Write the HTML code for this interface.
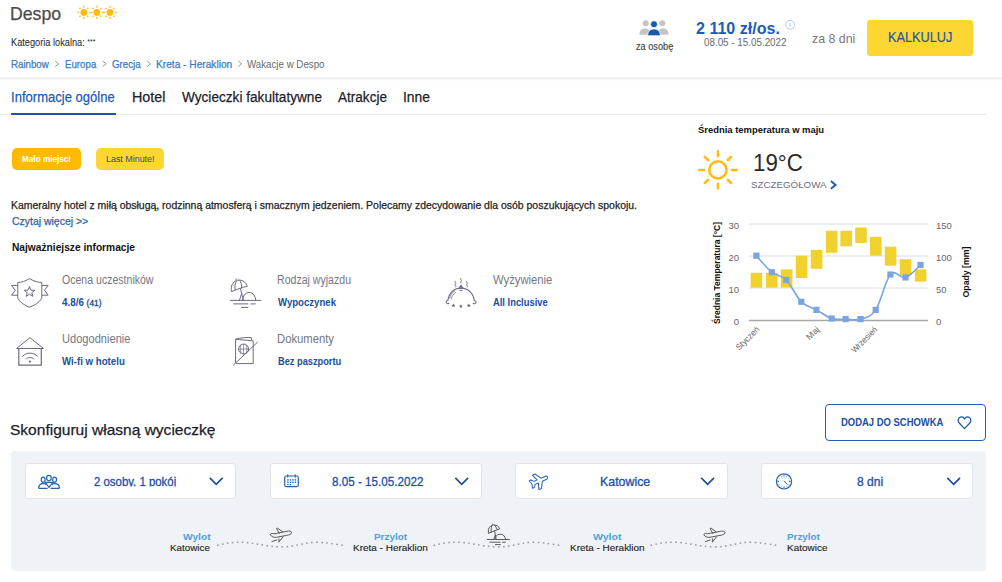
<!DOCTYPE html>
<html><head><meta charset="utf-8">
<style>
*{margin:0;padding:0;box-sizing:border-box}
html,body{width:1002px;height:582px;overflow:hidden;background:#fff;font-family:"Liberation Sans",sans-serif}
.t{position:absolute;white-space:nowrap;line-height:0;transform-origin:0 0}
.b{position:absolute}
.bl{display:inline-block;width:0;height:0;vertical-align:baseline}
</style></head><body>
<!-- header shadow -->
<div class="b" style="left:0;top:77px;width:1002px;height:4px;background:linear-gradient(#efefef,#f4f4f4 40%,#fff)"></div>
<!-- kalkuluj -->
<div class="b" style="left:867px;top:20px;width:106px;height:36px;background:#fdd631;border-radius:3px"></div>
<!-- tabs line -->
<div class="b" style="left:0;top:114px;width:986px;height:1px;background:#e8eaed"></div>
<div class="b" style="left:11px;top:113px;width:105px;height:2px;background:#1e55a8"></div>
<!-- badges -->
<div class="b" style="left:12px;top:148px;width:69px;height:22px;background:#ffba00;border-radius:5px"></div>
<div class="b" style="left:96px;top:148px;width:68px;height:22px;background:#fdd631;border-radius:5px"></div>
<!-- dodaj button -->
<div class="b" style="left:825px;top:404px;width:161px;height:37px;border:1.3px solid #1e5fb0;border-radius:4px"></div>
<!-- gray panel -->
<div class="b" style="left:11px;top:451px;width:975px;height:119.5px;background:#eff2f6;border-radius:4px"></div>
<div class="b" style="left:24.5px;top:463px;width:211px;height:36px;background:#fff;border:1px solid #e1e5ea;border-radius:3px"></div>
<div class="b" style="left:269.5px;top:463px;width:212px;height:36px;background:#fff;border:1px solid #e1e5ea;border-radius:3px"></div>
<div class="b" style="left:515px;top:463px;width:212.5px;height:36px;background:#fff;border:1px solid #e1e5ea;border-radius:3px"></div>
<div class="b" style="left:761px;top:463px;width:212px;height:36px;background:#fff;border:1px solid #e1e5ea;border-radius:3px"></div>
<svg class="b" style="left:0;top:0" width="1002" height="582" viewBox="0 0 1002 582" font-family="Liberation Sans, sans-serif">
<!-- header suns -->
<g fill="#ffbc0e">
<circle cx="83.8" cy="12.4" r="3.4"/><circle cx="96.9" cy="12.4" r="3.4"/><circle cx="110" cy="12.4" r="3.4"/>
</g>
<g stroke="#ffc631" stroke-width="1.5" stroke-linecap="butt">
<path d="M83.8,5.8v2 M83.8,17v2 M77,12.4h2 M89,12.4h3.6 M96.9,5.8v2 M96.9,17v2 M101.7,12.4h3.6 M110,5.8v2 M110,17v2 M115,12.4h2"/>
<path d="M79.3,7.9l1.2,1.2 M88.3,7.9l-1.2,1.2 M79.3,16.9l1.2,-1.2 M88.3,16.9l-1.2,-1.2 M92.4,7.9l1.2,1.2 M101.4,7.9l-1.2,1.2 M92.4,16.9l1.2,-1.2 M101.4,16.9l-1.2,-1.2 M105.5,7.9l1.2,1.2 M114.5,7.9l-1.2,1.2 M105.5,16.9l1.2,-1.2 M114.5,16.9l-1.2,-1.2"/>
</g>
<!-- breadcrumb chevrons -->
<g fill="none" stroke="#8a8a8a" stroke-width="0.9">
<path d="M55.2,61 L58.6,63.8 L55.2,66.6"/>
<path d="M102.7,61 L106.1,63.8 L102.7,66.6"/>
<path d="M147.1,61 L150.5,63.8 L147.1,66.6"/>
<path d="M238.3,61 L241.7,63.8 L238.3,66.6"/>
</g>
<!-- header people icon -->
<g fill="#c4c4c4">
<circle cx="645.7" cy="23.3" r="3"/><circle cx="662.2" cy="23.3" r="3"/>
<path d="M639.4,34.7 C639.5,30.5 641.5,28.6 645,28.6 C648,28.6 650,30 650.5,34.7 Z"/>
<path d="M657.4,34.7 C658,30 660,28.6 663,28.6 C666.5,28.6 668.5,30.5 668.6,34.7 Z"/>
</g>
<g fill="#1759b0" stroke="#fff" stroke-width="0.8">
<circle cx="654" cy="24.2" r="3.5"/>
<path d="M647.6,35.8 C647.8,31.2 650,29 654,29 C658,29 660.2,31.2 660.4,35.8 Z"/>
</g>
<!-- info circle -->
<circle cx="790.1" cy="24.8" r="4.4" fill="none" stroke="#b4c6dc" stroke-width="0.9"/>
<path d="M790.1,23.3v3.8 M790.1,21.6v0.8" stroke="#b4c6dc" stroke-width="0.9"/>
<!-- info icons -->
<g fill="none" stroke="#6b6b7e" stroke-width="1" stroke-linejoin="round">
<!-- shield -->
<path d="M29.5,278.6 C25,281.5 21,282.4 17.8,282.5 L17.8,298.2 C20,302.5 25,305.5 29.5,307.3 C34,305.5 39.5,302.5 41.8,298.2 L41.8,282.5 C38.5,282.4 34,281.5 29.5,278.6 Z"/>
<path d="M17.8,285.4 L11.4,285.4 L15.3,290.3 L11.6,295.2 L17.8,295.2"/>
<path d="M41.8,285.4 L48.1,285.4 L44.5,290.3 L48.1,295.2 L41.8,295.2"/>
<path d="M29.5,286.6 L31,290.2 L34.7,290.3 L31.8,292.7 L32.9,296.4 L29.5,294.2 L26.1,296.4 L27.2,292.7 L24.3,290.3 L28,290.2 Z"/>
<!-- beach -->
<path d="M229.9,300.4 H261.2"/>
<path d="M233.2,303.9 H248.2 M250.5,303.9 H255.7 M241,307.4 H248.2"/>
<path d="M242.5,300.4 A6.6,8 0 0 1 255.7,300.4"/>
<path d="M231.5,291.6 C230,285 234,280 239.5,280 C243.5,280.2 246.5,283 247.3,286.2 C242,287.5 236.5,289.5 231.5,291.6 Z"/>
<path d="M235.8,278.6 L236.6,280.3 M236.7,280.5 C235,283 234.6,287 235.2,290.1 M239.5,280.2 C241,282 241.8,285 241.8,288.5"/>
<path d="M240.4,288.6 L243.6,300.4 M241.6,293.6 L239.4,300.4"/>
<!-- cloche -->
<path d="M447.9,300.8 C448.5,293 454,288.2 461,288.2 C468,288.2 473.6,293 474.3,300.8" stroke-width="1.2"/>
<path d="M449.6,298.6 C450.3,295 452.3,292.3 455.2,290.8 M451.2,299.2 C451.8,296.2 453.4,293.8 455.8,292.4" stroke-width="0.75"/>
<path d="M447.9,300.8 C446.2,300.4 445.6,302.6 446.8,303.4 C447.6,304 448.6,303.6 449.2,303 M474.3,300.8 C476,300.4 476.6,302.6 475.4,303.4 C474.6,304 473.6,303.6 473,303" stroke-width="1.1"/>
<path d="M459.2,288.1 L461,285.3 L462.9,288.1 Z" stroke-width="1.1"/>
<path d="M459.4,290.4 H462.6"/>
<path d="M455.4,280.9 c-1.6,1.1 1.6,2.1 0,3.2 c-1.6,1.1 1.6,2.1 0.2,3.2 M461,278.2 c-1.6,1.1 1.6,2.1 0,3.2 c-1.4,1 0.8,1.5 0.2,2.2 M466.9,280.9 c-1.6,1.1 1.6,2.1 0,3.2 c-1.6,1.1 1.6,2.1 0.2,3.2" stroke-width="0.95"/>
<!-- house -->
<path d="M16.6,348.5 L29.9,337.6 L43.5,348.5 Z"/>
<path d="M18.8,348.6 V365.2 H41.3 V348.6" stroke-width="1.2"/>
<path d="M25.8,359.4 C28,357 31.8,357 34.3,359.4 M22.4,356.5 C26.5,352 33.5,352 37.7,356.5"/>
<!-- passport -->
<path d="M235.6,339.2 V362.8 C235.6,363.4 236.2,363.6 236.8,363.6 H253.2 V340.8 H251.8 M235.6,339.2 C240,338 246,337.2 251.2,337.6 L251.8,340.2 M235.6,339.2 C240,340 246,340 251.8,340.8"/>
<circle cx="243.6" cy="349" r="5"/>
<path d="M238.6,349 H248.6 M243.6,344 V354 M241,345 C240,348 240,350 241,353 M246.2,345 C247.2,348 247.2,350 246.2,353" stroke-width="0.7"/>
<path d="M233.2,365.3 L257.6,342.1"/>
</g>
<g fill="#6b6b7e">



<circle cx="29.9" cy="361.6" r="1.1"/><path d="M453.40,303.50 L453.96,304.84 L455.40,304.95 L454.30,305.89 L454.63,307.30 L453.40,306.55 L452.17,307.30 L452.50,305.89 L451.40,304.95 L452.84,304.84 Z"/><path d="M460.90,304.20 L461.46,305.54 L462.90,305.65 L461.80,306.59 L462.13,308.00 L460.90,307.25 L459.67,308.00 L460.00,306.59 L458.90,305.65 L460.34,305.54 Z"/><path d="M468.80,303.50 L469.36,304.84 L470.80,304.95 L469.70,305.89 L470.03,307.30 L468.80,306.55 L467.57,307.30 L467.90,305.89 L466.80,304.95 L468.24,304.84 Z"/>
</g>
<!-- weather sun -->
<g fill="none" stroke="#ffbb0f" stroke-width="2.5" stroke-linecap="round">
<circle cx="717.9" cy="169.9" r="8.6"/>
<path d="M717.9,151.2 V156 M717.9,183.8 V188.6 M699.2,169.9 H704 M731.8,169.9 H736.6 M704.8,156.8 L708,160 M731,156.8 L727.8,160 M704.8,183 L708,179.8 M731,183 L727.8,179.8"/>
</g>
<path d="M830.9,181 L835.6,184.9 L830.9,188.8" fill="none" stroke="#1d5db0" stroke-width="1.9"/>
<!-- heart -->
<path d="M964.5,428.6 L959.4,423.3 C957.5,421.3 957.8,418.2 960.3,417.2 C962.2,416.5 963.8,417.6 964.5,419 C965.2,417.6 966.8,416.5 968.7,417.2 C971.2,418.2 971.5,421.3 969.6,423.3 Z" fill="none" stroke="#1d5db0" stroke-width="1.3" stroke-linejoin="round"/>
<!-- dropdown icons -->
<g fill="none" stroke="#2563b0" stroke-width="1.2" stroke-linejoin="round">
<!-- people -->
<ellipse cx="43.2" cy="479.7" rx="1.9" ry="2.5"/><ellipse cx="48.9" cy="478.1" rx="2.3" ry="2.7"/><ellipse cx="54.6" cy="479.7" rx="1.9" ry="2.5"/>
<path d="M38.6,488.3 C38.6,485.5 40.5,483.6 43.4,483.3 C44.8,483.3 45.6,484 46.3,485 M38.6,488.3 H47.6"/>
<path d="M59.5,488.3 C59.5,485.5 57.6,483.6 54.7,483.3 C53.3,483.3 52.5,484 51.8,485 M59.5,488.3 H50.5"/>
<path d="M45.2,482.4 H52.9 L49,487.3 Z"/>
<!-- calendar -->
<rect x="284.7" y="476" width="13.6" height="10.6" rx="1.5"/>
<path d="M287.7,474.4 V477.6 M295.3,474.4 V477.6"/>
<!-- clock -->
<circle cx="784" cy="481.4" r="7.6"/>
<path d="M783.8,480.8 L787.4,484.6" stroke-width="1"/>
<!-- plane -->
<path transform="translate(539.2,480.8) rotate(-24) scale(0.92)" stroke-width="1.1" d="M10,0 C10,-1.2 9.2,-1.8 8,-1.8 L3,-1.8 L-1.2,-8.6 L-4.2,-8.6 L-1.8,-1.8 L-5.6,-1.8 L-7.8,-4.4 L-10,-4.4 L-8.8,-1 L-8.8,1 L-10,4.4 L-7.8,4.4 L-5.6,1.8 L-1.8,1.8 L-4.2,8.6 L-1.2,8.6 L3,1.8 L8,1.8 C9.2,1.8 10,1.2 10,0 Z"/>
</g>
<g fill="#2563b0">
<rect x="287.2" y="479.2" width="1.4" height="1.4"/><rect x="289.7" y="479.2" width="1.4" height="1.4"/><rect x="292.2" y="479.2" width="1.4" height="1.4"/><rect x="294.7" y="479.2" width="1.4" height="1.4"/>
<rect x="287.2" y="481.6" width="1.4" height="1.4"/><rect x="289.7" y="481.6" width="1.4" height="1.4"/><rect x="292.2" y="481.6" width="1.4" height="1.4"/><rect x="294.7" y="481.6" width="1.4" height="1.4"/>
<rect x="287.2" y="484" width="1.4" height="1.2"/><rect x="289.7" y="484" width="1.4" height="1.2"/>
<path d="M784,474.9 v1.5 M784,486.4 v1.5 M777.5,481.4 h1.5 M789,481.4 h1.5" stroke="#2563b0" stroke-width="1.1"/><circle cx="786.80" cy="476.55" r="0.45"/><circle cx="788.85" cy="478.60" r="0.45"/><circle cx="788.85" cy="484.20" r="0.45"/><circle cx="786.80" cy="486.25" r="0.45"/><circle cx="781.20" cy="486.25" r="0.45"/><circle cx="779.15" cy="484.20" r="0.45"/><circle cx="779.15" cy="478.60" r="0.45"/><circle cx="781.20" cy="476.55" r="0.45"/>
</g>
<!-- dropdown chevrons -->
<g fill="none" stroke="#1d4f9c" stroke-width="1.7">
<path d="M209.8,477.9 L216.2,484.3 L222.6,477.9"/>
<path d="M455.3,477.9 L461.7,484.3 L468.1,477.9"/>
<path d="M701.2,477.9 L707.6,484.3 L714,477.9"/>
<path d="M947.2,477.9 L953.6,484.3 L960,477.9"/>
</g>
<!-- timeline dotted waves -->
<g fill="none" stroke="#9a9a9a" stroke-width="1.5" stroke-dasharray="1.6 3.4">
<path d="M217,545.5 C226,543 234,542 242,542.3 C256,542.6 266,547 281,546.9 C296,546.8 304,542.3 316,542.3 C328,542.3 338,545 346,545.5"/>
<path d="M433.5,545.5 C442,543 450,542 458.5,542.3 C472.5,542.6 482.5,547 497.5,546.9 C512.5,546.8 520.5,542.3 532.5,542.3 C544.5,542.3 554.5,545 562.5,545.5"/>
<path d="M650.5,545.5 C659,543 667,542 675.5,542.3 C689.5,542.6 699.5,547 714.5,546.9 C729.5,546.8 737.5,542.3 749.5,542.3 C761.5,542.3 771.5,545 779.5,545.5"/>
</g>
<!-- timeline icons -->
<g fill="none" stroke="#5a5a5a" stroke-width="1" stroke-linejoin="round">
<g>
<path d="M270.5,535 C270,533.6 272,533 274,533.8 L287,531.3 C289.5,530.8 291.8,531.3 291.6,532.8 C291.4,534.2 289,535 286.5,535.4 L276.5,537.3 C274,537.6 271.5,536.8 270.5,535 Z"/>
<path d="M276.5,528.4 L277.7,528.2 L283,532.2 M276.5,528.4 L279.5,533.8 M279,538.5 L278.8,542.2 L283.3,536.5 M271.6,541.7 L277,539.9"/>
</g>
<g transform="translate(433.5,0)">
<path d="M270.5,535 C270,533.6 272,533 274,533.8 L287,531.3 C289.5,530.8 291.8,531.3 291.6,532.8 C291.4,534.2 289,535 286.5,535.4 L276.5,537.3 C274,537.6 271.5,536.8 270.5,535 Z"/>
<path d="M276.5,528.4 L277.7,528.2 L283,532.2 M276.5,528.4 L279.5,533.8 M279,538.5 L278.8,542.2 L283.3,536.5 M271.6,541.7 L277,539.9"/>
</g>
<!-- beach small -->
<path d="M487,539.5 H509.9 M489.4,542.2 H500.6 M502.2,542.2 H505.7 M495,544.6 H500.8"/>
<path d="M494.8,539.5 C495.6,536.2 496.8,534.4 499,534.4 L501.6,534.4 C503.6,534.4 505,537 505.8,539.5"/>
<path d="M488.4,533.4 L488.4,529.3 C489.5,526.5 491.5,525 494,524.9 C496.8,525 499,526.8 499.8,528.8 C496,530 492,531.8 488.4,533.4 Z"/>
<path d="M491.8,525.4 C491,527.5 491,530.5 491.4,532.4 M494.6,525.3 C495.8,526.6 496.8,528.2 497.3,529.8 M492.6,524.6 L492.2,523.6" stroke-width="1"/>
<path d="M494.6,530.8 L496.2,539.5 M495.4,534.8 L493.6,539.5"/>
</g>

<line x1="749" y1="288.0" x2="928" y2="288.0" stroke="#dcdcdc" stroke-width="1"/>
<line x1="749" y1="256.0" x2="928" y2="256.0" stroke="#dcdcdc" stroke-width="1"/>
<line x1="749" y1="224.0" x2="928" y2="224.0" stroke="#dcdcdc" stroke-width="1"/>
<rect x="750.6" y="272.8" width="11.6" height="14.9" fill="#f0d12e"/>
<rect x="766.0" y="272.8" width="11.6" height="14.9" fill="#f0d12e"/>
<rect x="780.8" y="269.4" width="11.6" height="18.2" fill="#f0d12e"/>
<rect x="795.8" y="255.7" width="11.6" height="22.4" fill="#f0d12e"/>
<rect x="810.8" y="249.9" width="11.6" height="18.9" fill="#f0d12e"/>
<rect x="825.9" y="230.7" width="11.6" height="22.1" fill="#f0d12e"/>
<rect x="840.4" y="230.7" width="11.6" height="15.7" fill="#f0d12e"/>
<rect x="855.2" y="227.5" width="11.6" height="15.4" fill="#f0d12e"/>
<rect x="870.0" y="236.8" width="11.6" height="18.9" fill="#f0d12e"/>
<rect x="884.8" y="246.7" width="11.6" height="18.9" fill="#f0d12e"/>
<rect x="899.7" y="259.2" width="11.6" height="16.0" fill="#f0d12e"/>
<rect x="914.8" y="269.4" width="11.6" height="12.2" fill="#f0d12e"/>
<line x1="749" y1="320.5" x2="928" y2="320.5" stroke="#a8a8a8" stroke-width="1.3"/>
<path d="M756.4,255.7 C759.1,258.6 766.6,267.9 771.8,272.2 C777.0,276.5 781.1,274.8 786.3,280 C791.5,285.2 796.0,296.6 801.3,301.8 C806.6,307.0 811.1,307.0 816.4,309.9 C821.7,312.8 826.6,316.9 831.7,318.5 C836.8,320.1 840.5,319.0 845.6,319.1 C850.7,319.2 855.3,320.7 860.6,319.1 C865.9,317.5 870.5,317.7 875.7,309.9 C880.9,302.1 885.2,280.2 890.4,274.5 C895.6,268.8 900.2,279.1 905.5,277.4 C910.8,275.7 917.9,267.2 920.5,265" fill="none" stroke="#7ba4e2" stroke-width="1.6"/>
<rect x="753.3" y="252.6" width="6.2" height="6.2" fill="#7ba4e2"/>
<rect x="768.7" y="269.1" width="6.2" height="6.2" fill="#7ba4e2"/>
<rect x="783.2" y="276.9" width="6.2" height="6.2" fill="#7ba4e2"/>
<rect x="798.2" y="298.7" width="6.2" height="6.2" fill="#7ba4e2"/>
<rect x="813.3" y="306.8" width="6.2" height="6.2" fill="#7ba4e2"/>
<rect x="828.6" y="315.4" width="6.2" height="6.2" fill="#7ba4e2"/>
<rect x="842.5" y="316.0" width="6.2" height="6.2" fill="#7ba4e2"/>
<rect x="857.5" y="316.0" width="6.2" height="6.2" fill="#7ba4e2"/>
<rect x="872.6" y="306.8" width="6.2" height="6.2" fill="#7ba4e2"/>
<rect x="887.3" y="271.4" width="6.2" height="6.2" fill="#7ba4e2"/>
<rect x="902.4" y="274.3" width="6.2" height="6.2" fill="#7ba4e2"/>
<rect x="917.4" y="261.9" width="6.2" height="6.2" fill="#7ba4e2"/>
<text x="739" y="228.5" text-anchor="end" font-size="9.5" fill="#666">30</text>
<text x="739" y="260.5" text-anchor="end" font-size="9.5" fill="#666">20</text>
<text x="739" y="292.5" text-anchor="end" font-size="9.5" fill="#666">10</text>
<text x="739" y="324.5" text-anchor="end" font-size="9.5" fill="#666">0</text>
<text x="936" y="228.5" font-size="9.5" fill="#666">150</text>
<text x="936" y="260.5" font-size="9.5" fill="#666">100</text>
<text x="936" y="292.5" font-size="9.5" fill="#666">50</text>
<text x="936" y="324.5" font-size="9.5" fill="#666">0</text>
<text transform="translate(720,273) rotate(-90)" text-anchor="middle" font-size="9.6" font-weight="700" fill="#111" textLength="102" lengthAdjust="spacingAndGlyphs">Średnia Temperatura [°C]</text>
<text transform="translate(968.8,272) rotate(-90)" text-anchor="middle" font-size="9.6" font-weight="700" fill="#111" textLength="51" lengthAdjust="spacingAndGlyphs">Opady [mm]</text>
<text transform="translate(760,330) rotate(-45)" text-anchor="end" font-size="8.6" fill="#666" textLength="29.5" lengthAdjust="spacingAndGlyphs">Styczeń</text>
<text transform="translate(820,330) rotate(-45)" text-anchor="end" font-size="8.6" fill="#666" textLength="15" lengthAdjust="spacingAndGlyphs">Maj</text>
<text transform="translate(878,330) rotate(-45)" text-anchor="end" font-size="8.6" fill="#666" textLength="33" lengthAdjust="spacingAndGlyphs">Wrzesień</text>
</svg>
<div class="t" id="t0" style="left:9.92px;top:14.30px;font-size:19px;font-weight:400;color:#4a4a4a;transform:scaleX(0.9294);-webkit-text-stroke:0.25px currentColor;">Despo<i class="bl"></i></div>
<div class="t" id="t1" style="left:10.90px;top:41.84px;font-size:10.5px;font-weight:400;color:#222;transform:scaleX(0.8776);-webkit-text-stroke:0;">Kategoria lokalna: <span style="font-size:0.75em;vertical-align:0.3em">***</span><i class="bl"></i></div>
<div class="t" id="t2" style="left:11.00px;top:64.30px;font-size:10.6px;font-weight:400;color:#3b7bbf;transform:scaleX(0.9167);-webkit-text-stroke:0.25px currentColor;">Rainbow<i class="bl"></i></div>
<div class="t" id="t3" style="left:64.70px;top:64.30px;font-size:10.6px;font-weight:400;color:#3b7bbf;transform:scaleX(0.9160);-webkit-text-stroke:0.25px currentColor;">Europa<i class="bl"></i></div>
<div class="t" id="t4" style="left:111.90px;top:64.30px;font-size:10.6px;font-weight:400;color:#3b7bbf;transform:scaleX(0.9198);-webkit-text-stroke:0.25px currentColor;">Grecja<i class="bl"></i></div>
<div class="t" id="t5" style="left:155.66px;top:64.30px;font-size:10.6px;font-weight:400;color:#3b7bbf;transform:scaleX(0.9589);-webkit-text-stroke:0.25px currentColor;">Kreta - Heraklion<i class="bl"></i></div>
<div class="t" id="t6" style="left:247.30px;top:64.30px;font-size:10.6px;font-weight:400;color:#6b6b6b;transform:scaleX(0.9183);">Wakacje w Despo<i class="bl"></i></div>
<div class="t" id="t7" style="left:635.70px;top:46.80px;font-size:10px;font-weight:400;color:#3a3a3a;transform:scaleX(0.9189);-webkit-text-stroke:0.1px currentColor;">za osobę<i class="bl"></i></div>
<div class="t" id="t8" style="left:696.40px;top:27.60px;font-size:16.3px;font-weight:700;color:#1a5db5;transform:scaleX(0.9860);">2 110 zł/os.<i class="bl"></i></div>
<div class="t" id="t9" style="left:703.80px;top:42.90px;font-size:10.2px;font-weight:400;color:#6a6a6a;transform:scaleX(0.9644);">08.05 - 15.05.2022<i class="bl"></i></div>
<div class="t" id="t10" style="left:811.70px;top:38.90px;font-size:13.5px;font-weight:400;color:#777;transform:scaleX(0.9155);">za 8 dni<i class="bl"></i></div>
<div class="t" id="t11" style="left:888.20px;top:37.10px;font-size:15px;font-weight:400;color:#1d56a3;transform:scaleX(0.8494);-webkit-text-stroke:0.2px currentColor;">KALKULUJ<i class="bl"></i></div>
<div class="t" id="t12" style="left:10.66px;top:96.50px;font-size:15.2px;font-weight:400;color:#1b5cb2;transform:scaleX(0.8597);-webkit-text-stroke:0.25px currentColor;">Informacje ogólne<i class="bl"></i></div>
<div class="t" id="t13" style="left:132.30px;top:96.50px;font-size:15.2px;font-weight:400;color:#1d1d2b;transform:scaleX(0.9444);-webkit-text-stroke:0.25px currentColor;">Hotel<i class="bl"></i></div>
<div class="t" id="t14" style="left:182.00px;top:96.50px;font-size:15.2px;font-weight:400;color:#1d1d2b;transform:scaleX(0.8973);-webkit-text-stroke:0.25px currentColor;">Wycieczki fakultatywne<i class="bl"></i></div>
<div class="t" id="t15" style="left:338.30px;top:96.50px;font-size:15.2px;font-weight:400;color:#1d1d2b;transform:scaleX(0.8929);-webkit-text-stroke:0.25px currentColor;">Atrakcje<i class="bl"></i></div>
<div class="t" id="t16" style="left:402.92px;top:96.50px;font-size:15.2px;font-weight:400;color:#1d1d2b;transform:scaleX(0.9147);-webkit-text-stroke:0.25px currentColor;">Inne<i class="bl"></i></div>
<div class="t" id="t17" style="left:21.90px;top:158.90px;font-size:9.6px;font-weight:700;color:#fff;transform:scaleX(0.8525);">Mało miejsc!<i class="bl"></i></div>
<div class="t" id="t18" style="left:105.60px;top:158.90px;font-size:9.6px;font-weight:400;color:#3a4f86;transform:scaleX(0.9280);-webkit-text-stroke:0.05px currentColor;">Last Minute!<i class="bl"></i></div>
<div class="t" id="t19" style="left:10.66px;top:204.60px;font-size:10.9px;font-weight:400;color:#222;transform:scaleX(0.9602);-webkit-text-stroke:0.25px currentColor;">Kameralny hotel z miłą obsługą, rodzinną atmosferą i smacznym jedzeniem. Polecamy zdecydowanie dla osób poszukujących spokoju.<i class="bl"></i></div>
<div class="t" id="t20" style="left:11.50px;top:220.60px;font-size:11.3px;font-weight:400;color:#2065b5;transform:scaleX(0.9264);-webkit-text-stroke:0.25px currentColor;">Czytaj więcej >><i class="bl"></i></div>
<div class="t" id="t21" style="left:11.50px;top:247.40px;font-size:10.6px;font-weight:700;color:#111;transform:scaleX(0.9627);">Najważniejsze informacje<i class="bl"></i></div>
<div class="t" id="t22" style="left:62.00px;top:280.30px;font-size:12px;font-weight:400;color:#767682;transform:scaleX(0.8793);">Ocena uczestników<i class="bl"></i></div>
<div class="t" id="t23" style="left:62.00px;top:303.00px;font-size:10px;font-weight:700;color:#1b4f9c;transform:scaleX(0.9837);">4.8/6 <span style="font-size:0.85em;font-weight:400;-webkit-text-stroke:0.35px currentColor">(41)</span><i class="bl"></i></div>
<div class="t" id="t24" style="left:277.20px;top:280.30px;font-size:12px;font-weight:400;color:#767682;transform:scaleX(0.8806);">Rodzaj wyjazdu<i class="bl"></i></div>
<div class="t" id="t25" style="left:278.00px;top:303.00px;font-size:10px;font-weight:700;color:#1b4f9c;transform:scaleX(0.9604);">Wypoczynek<i class="bl"></i></div>
<div class="t" id="t26" style="left:492.90px;top:280.30px;font-size:12px;font-weight:400;color:#767682;transform:scaleX(0.9375);">Wyżywienie<i class="bl"></i></div>
<div class="t" id="t27" style="left:492.90px;top:303.00px;font-size:10px;font-weight:700;color:#1b4f9c;transform:scaleX(0.9373);">All Inclusive<i class="bl"></i></div>
<div class="t" id="t28" style="left:62.30px;top:338.80px;font-size:12px;font-weight:400;color:#767682;transform:scaleX(0.9238);">Udogodnienie<i class="bl"></i></div>
<div class="t" id="t29" style="left:62.30px;top:361.50px;font-size:10px;font-weight:700;color:#1b4f9c;transform:scaleX(0.9675);">Wi-fi w hotelu<i class="bl"></i></div>
<div class="t" id="t30" style="left:277.20px;top:338.80px;font-size:12px;font-weight:400;color:#767682;transform:scaleX(0.9393);">Dokumenty<i class="bl"></i></div>
<div class="t" id="t31" style="left:278.00px;top:361.50px;font-size:10px;font-weight:700;color:#1b4f9c;transform:scaleX(0.9247);">Bez paszportu<i class="bl"></i></div>
<div class="t" id="t32" style="left:697.70px;top:129.90px;font-size:9.8px;font-weight:700;color:#111;transform:scaleX(0.9610);">Średnia temperatura w maju<i class="bl"></i></div>
<div class="t" id="t33" style="left:753.40px;top:162.90px;font-size:23px;font-weight:400;color:#2a2a2a;transform:scaleX(0.9699);-webkit-text-stroke:0;">19°C<i class="bl"></i></div>
<div class="t" id="t34" style="left:751.00px;top:185.00px;font-size:9.8px;font-weight:400;color:#6e6e80;transform:scaleX(0.9955);">SZCZEGÓŁOWA<i class="bl"></i></div>
<div class="t" id="t35" style="left:10.30px;top:429.80px;font-size:15.4px;font-weight:400;color:#1c1c2c;transform:scaleX(1.0089);-webkit-text-stroke:0.25px currentColor;">Skonfiguruj własną wycieczkę<i class="bl"></i></div>
<div class="t" id="t36" style="left:841.00px;top:422.80px;font-size:10px;font-weight:700;color:#1b4f9c;transform:scaleX(0.9451);">DODAJ DO SCHOWKA<i class="bl"></i></div>
<div class="t" id="t37" style="left:94.20px;top:482.20px;font-size:12.5px;font-weight:400;color:#1b4fa2;transform:scaleX(0.9122);clip-path:polygon(-20px -30px,800px -30px,800px 4.30px,-20px 4.30px);-webkit-text-stroke:0.3px currentColor;">2 osoby, 1 pokój<i class="bl"></i></div>
<div class="t" id="t38" style="left:331.80px;top:482.20px;font-size:12.5px;font-weight:400;color:#1b4fa2;transform:scaleX(0.9327);clip-path:polygon(-20px -30px,800px -30px,800px 4.30px,-20px 4.30px);-webkit-text-stroke:0.3px currentColor;">8.05 - 15.05.2022<i class="bl"></i></div>
<div class="t" id="t39" style="left:600.20px;top:482.20px;font-size:12.5px;font-weight:400;color:#1b4fa2;transform:scaleX(0.9900);clip-path:polygon(-20px -30px,800px -30px,800px 4.30px,-20px 4.30px);-webkit-text-stroke:0.3px currentColor;">Katowice<i class="bl"></i></div>
<div class="t" id="t40" style="left:857.20px;top:482.20px;font-size:12.5px;font-weight:400;color:#1b4fa2;transform:scaleX(0.9628);clip-path:polygon(-20px -30px,800px -30px,800px 4.30px,-20px 4.30px);-webkit-text-stroke:0.3px currentColor;">8 dni<i class="bl"></i></div>
<div class="t" id="t41" style="left:182.50px;top:536.90px;font-size:9.8px;font-weight:700;color:#4ba3de;transform:scaleX(1.0415);">Wylot<i class="bl"></i></div>
<div class="t" id="t42" style="left:170.20px;top:547.70px;font-size:9.8px;font-weight:400;color:#222;transform:scaleX(1.0034);-webkit-text-stroke:0.12px currentColor;">Katowice<i class="bl"></i></div>
<div class="t" id="t43" style="left:373.50px;top:536.90px;font-size:9.8px;font-weight:700;color:#4ba3de;transform:scaleX(1.0100);">Przylot<i class="bl"></i></div>
<div class="t" id="t44" style="left:352.60px;top:547.70px;font-size:9.8px;font-weight:400;color:#222;transform:scaleX(1.0175);-webkit-text-stroke:0.12px currentColor;">Kreta - Heraklion<i class="bl"></i></div>
<div class="t" id="t45" style="left:593.00px;top:536.90px;font-size:9.8px;font-weight:700;color:#4ba3de;transform:scaleX(1.0755);">Wylot<i class="bl"></i></div>
<div class="t" id="t46" style="left:569.80px;top:547.70px;font-size:9.8px;font-weight:400;color:#222;transform:scaleX(1.0148);-webkit-text-stroke:0.12px currentColor;">Kreta - Heraklion<i class="bl"></i></div>
<div class="t" id="t47" style="left:786.90px;top:536.90px;font-size:9.8px;font-weight:700;color:#4ba3de;transform:scaleX(1.0070);">Przylot<i class="bl"></i></div>
<div class="t" id="t48" style="left:786.90px;top:547.70px;font-size:9.8px;font-weight:400;color:#222;transform:scaleX(1.0185);-webkit-text-stroke:0.12px currentColor;">Katowice<i class="bl"></i></div>
</body></html>
